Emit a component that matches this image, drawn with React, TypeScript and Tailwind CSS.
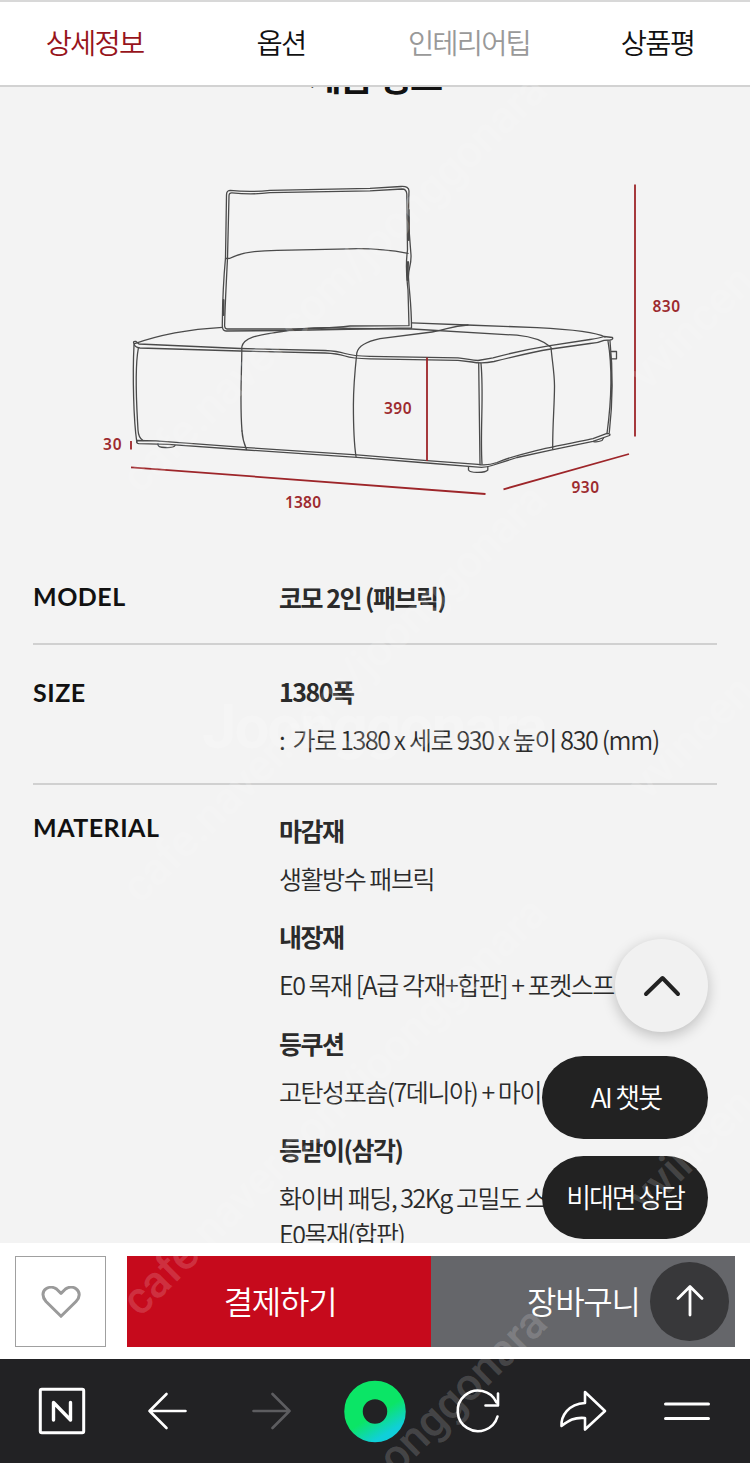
import React from 'react';

interface Tab {
  label: string;
  className: string;
}

interface MaterialItem {
  title: string;
  lines: string[];
}

const TABS: Tab[] = [
  { label: '상세정보', className: 'text-[#97141b]' },
  { label: '옵션', className: 'text-[#111111]' },
  { label: '인테리어팁', className: 'text-[#999999]' },
  { label: '상품평', className: 'text-[#111111]' },
];

const MATERIALS: MaterialItem[] = [
  { title: '마감재', lines: ['생활방수 패브릭'] },
  { title: '내장재', lines: ['E0 목재 [A급 각재+합판] + 포켓스프'] },
  { title: '등쿠션', lines: ['고탄성포솜(7데니아) + 마이'] },
  { title: '등받이(삼각)', lines: ['화이버 패딩, 32Kg 고밀도 스', 'E0목재(합판)'] },
];

/**
 * Sticky tab bar at the top of the product page
 */
function TabBar() {
  return (
    <nav className="relative z-10 grid h-[87px] shrink-0 grid-cols-[189px_184px_192px_185px] border-t-2 border-b-2 border-t-[#d8d8d8] border-b-[#d2d2d2] bg-white">
      {TABS.map((tab) => (
        <button
          key={tab.label}
          className={`flex items-center justify-center pb-0.5 text-[28.5px] leading-none font-[350] tracking-[-1.8px] ${tab.className}`}
        >
          {tab.label}
        </button>
      ))}
    </nav>
  );
}

/**
 * Line drawing of the sofa with its dimensions in mm
 */
function SofaDrawing() {
  return (
    <svg className="block h-[360px] w-[600px] shrink-0" viewBox="95 170 600 360">
      <g fill="none" stroke="#4a4a4a" strokeWidth="1.3" strokeLinecap="round" strokeLinejoin="round">
        {/* Backrest */}
        <path d="M225.5 258 L226.5 195 Q226.5 190.5 230 190.3 Q250 192.5 270 190.3 L370 188.3 L401 186.5 Q409 186 409 191 C408 215 409 235 411 255 C411.5 266 408 268 408.5 278 C409.5 295 411.5 305 411.5 328 L285 330.5 L226 331 Q222.5 331 222.3 326 C222.5 305 222.5 290 225.5 258" />
        <path d="M227.5 258 L229 196 Q229 192.5 232 192.8 Q252 195 270 192.6 L370 190.8 L402 189 Q406.5 189 406.8 194 L407.5 250 C405 268 407 280 408 290 L409 325.7 L350 326 C325 329 310 329 285 329 L227 329 Q225 329 224.6 326 C225 305 226 290 227.5 258" />
        <path d="M225.5 258.5 L230 258.3 C240 253 255 250.5 277 250.3 L350 248.8 C375 248 390 250 408 253.3" />
        <path d="M408.8 210 V240 M408 262 L407.5 280 M223.5 300 V315" strokeWidth="2" />
        {/* Seat top */}
        <path d="M134 343.8 C150 338 175 330 222.5 327.3" />
        <path d="M411.7 322.9 L467 325 L537 327.6 C565 329 595 331.5 605 337" />
        <path d="M134 343.5 Q132.5 341 136 341.5 L139 344 L240 348.5 L325 350.5 Q337 351 345 353.5 Q353 356 370 356.3 L458 357.8 Q470 359.5 478 360.5 L493 357.8 C515 352 535 348 550 345.6 L590 339.5 Q600 338 604 336.5 L612.5 337.5 Q613.5 339.5 610 340 L604 340.3 Q598 343 590 343.5 L551 349 C530 352.5 510 357.5 494 361.5 Q482 364 472 362 L458 360.4 L370 358.8 Q352 358.5 345 356 Q337 353.5 325 353 L240 351 L140 348 Q134 347 134 343.5" />
        <path d="M242 431 C239.5 400 242 370 241.8 347 C244 335.5 265 334.5 282 331.5 C300 328 325 327 350 328.5" />
        <path d="M468 325 C450 326 447 330 432 332 L380 338.7 Q359 343 356.8 353 C355 370 353.4 385 353.4 405 C353.4 430 353.5 440 356 456.5" />
        <path d="M350 328.5 L412 329 L517 335.2 C535 337 545 342 551 347.3 C552 360 554.5 373 554.5 386 C554.5 405 552.5 425 552.7 449" />
        <path d="M242 431 Q242.5 440 246.5 449.5" />
        {/* Sides */}
        <path d="M134 345 C132.5 375 133.5 420 136.8 442 M138.3 348.5 C134 372 137 410 138 430 Q138.5 438 143 440.5" />
        <path d="M478.7 363.5 L480 464.5 M481 363.5 C484 395 480 430 482 464" />
        <path d="M608 341 C612 365 611.5 400 607 433.5 M610 341 C612.5 365 613 400 609.3 432.5" />
        <path d="M611.5 351.5 H616.5 V358.8 H611.5" />
        {/* Bottom edge */}
        <path d="M137 440.5 L156 440.8 L247 447.6 L357 454.8 L427 460.7 L478 464.3 Q487 466 497 462.5 C520 453 550 447.5 593 438.7 L607 433.3 Q611 433.5 609.5 435.5 L593 441.3 L552 449.8 L517 457.5 L492 465.5 Q485 468.2 475 466.8 L427 463 L357 457.3 L247 450 L168 444.3 L139 443.7 Q136 443.5 137 440.5" />
        <path d="M158 444 Q157.5 447.5 165 447.5 Q174 448 175 445.5 M468.5 467 V470 Q470 472.5 478 472.3 Q486 472.3 487.8 470 V467 M593.5 441.5 Q597 442.5 602 440.5 L603.5 438" />
      </g>
      <g fill="none" stroke="#9d2529" strokeWidth="1.8">
        <path d="M635 184.5 V436.5 M427 357.5 V461 M131 441 V449.5 M131 467.3 L485.5 494 M503.5 489.3 L629 454" />
      </g>
      <g fill="#9d2b2f" fontFamily="'Noto Sans', sans-serif" fontSize="15.5" fontWeight="600">
        <text x="652.5" y="312" textLength="27.5">830</text>
        <text x="384" y="414" textLength="27.5">390</text>
        <text x="103" y="449.5" textLength="18.5">30</text>
        <text x="285" y="508" textLength="36">1380</text>
        <text x="571.5" y="493.3" textLength="27.5">930</text>
      </g>
    </svg>
  );
}

interface SpecRowProps {
  label: string;
  className: string;
  children: React.ReactNode;
}

function SpecRow({ label, className, children }: SpecRowProps) {
  return (
    <div className={`mx-[33px] flex shrink-0 ${className}`}>
      <dt className="w-[246px] shrink-0 font-[Lato,sans-serif] text-[25px] leading-9 font-bold tracking-[0.5px] text-[#111111]">
        {label}
      </dt>
      <dd className="min-w-0 whitespace-nowrap text-[#2b2b2b]">{children}</dd>
    </div>
  );
}

function Specs() {
  return (
    <dl className="flex flex-col">
      <SpecRow label="MODEL" className="h-[67px] border-b-2 border-[#d0d0d0]">
        <p className="pt-px text-[25px] leading-9 font-bold tracking-[-1.5px]">코모 2인 (패브릭)</p>
      </SpecRow>
      <SpecRow label="SIZE" className="h-[140px] border-b-2 border-[#d0d0d0] pt-[29px]">
        <p className="-mt-px text-[25px] leading-9 font-bold tracking-[-1.5px]">1380폭</p>
        <p className="mt-3 text-[25px] leading-9 font-[350] tracking-[-1.35px]">
          :<span className="pl-1"> 가로 1380 x 세로 930 x 높이 830 (mm)</span>
        </p>
      </SpecRow>
      <SpecRow label="MATERIAL" className="pt-[24px]">
        <div className="flex flex-col gap-[21.8px] pt-[3px]">
          {MATERIALS.map((item) => (
            <div key={item.title}>
              <p className="text-[25px] leading-9 font-bold tracking-[-1.5px]">{item.title}</p>
              <div className="mt-3">
                {item.lines.map((line) => (
                  <p key={line} className="text-[25px] leading-[36.5px] font-[350] tracking-[-1.45px]">
                    {line}
                  </p>
                ))}
              </div>
            </div>
          ))}
        </div>
      </SpecRow>
    </dl>
  );
}

/**
 * Buttons that float above the product details
 */
function FloatingActions() {
  return (
    <div className="absolute right-[42px] bottom-1 z-10 flex flex-col items-end">
      <button className="mb-6 flex h-[93px] w-[93px] items-center justify-center rounded-full bg-[#f1f1f1] shadow-[0_4px_14px_rgba(0,0,0,0.22)]">
        <svg className="h-6 w-10" viewBox="0 0 40 24" fill="none" stroke="#222222" strokeWidth="4" strokeLinecap="round" strokeLinejoin="round">
          <path d="M4 20 L20.5 4 L36 20" />
        </svg>
      </button>
      <button className="mb-[17px] flex h-[83px] w-[166px] items-center justify-center rounded-full bg-[#222222] pb-px pl-0.5 text-[27px] font-[350] tracking-[-1.8px] text-white">
        AI 챗봇
      </button>
      <button className="flex h-[83px] w-[166px] items-center justify-center rounded-full bg-[#222222] pb-px text-[27px] font-[350] tracking-[-2.1px] text-white">
        비대면 상담
      </button>
    </div>
  );
}

function PurchaseBar() {
  return (
    <div className="flex h-[116px] shrink-0 bg-white px-[15px] pt-[13px]">
      <button className="flex h-[91px] w-[91px] items-center justify-center border border-[#a0a0a0]">
        <svg className="h-8 w-10" viewBox="0 0 40 32" fill="none" stroke="#9a9a9a" strokeWidth="3" strokeLinejoin="round">
          <path d="M20 30.3 L5 15.5 C0.5 10.5 1.5 5 5 2.7 C8.5 0.7 13 1 15.5 3 L20 7.3 L24.5 3 C27.5 0.7 32 0.7 35 2.7 C39.5 6 39 11.5 35 15.5 Z" />
        </svg>
      </button>
      <button className="ml-[21px] h-[91px] w-[304px] bg-[#c60a1c] pb-1 pl-0.5 text-[32px] font-[350] tracking-[-1.3px] text-white">
        결제하기
      </button>
      <div className="flex h-[91px] flex-1 items-center bg-[#65666a]">
        <button className="w-[219px] pb-1 pl-[96px] text-left text-[32px] leading-none font-[350] tracking-[-1.3px] whitespace-nowrap text-white">
          장바구니
        </button>
        <button className="-mt-px flex h-[79px] w-[79px] items-center justify-center rounded-full bg-[#38383a]">
          <svg className="h-8 w-7" viewBox="0 0 28 32" fill="none" stroke="#ffffff" strokeWidth="2.8" strokeLinecap="round" strokeLinejoin="round">
            <path d="M14 30 V2 M2 13.5 L14 1.5 L26 13.5" />
          </svg>
        </button>
      </div>
    </div>
  );
}

/**
 * Browser toolbar
 */
function BrowserToolbar() {
  return (
    <div className="h-[104px] shrink-0 bg-[#222224]">
      <svg className="block h-[104px] w-[750px]" viewBox="0 1359 750 104" fill="none" stroke="#ffffff" strokeWidth="2.6" strokeLinecap="round" strokeLinejoin="round">
        <defs>
          <linearGradient id="ring" x1="0.2" y1="0" x2="0.8" y2="1">
            <stop offset="0.55" stopColor="#0be566" />
            <stop offset="1" stopColor="#10cfd9" />
          </linearGradient>
        </defs>
        <rect x="40.3" y="1389.3" width="43.4" height="43.4" rx="1.5" strokeWidth="3" />
        <path d="M53.5 1420 V1402.5 L70.5 1420 V1402.5" strokeWidth="3.4" />
        <path d="M185.5 1411 H149.5 M166.5 1394 L149.5 1411 L166.5 1428" />
        <path d="M253.5 1411 H289.5 M272.5 1394 L289.5 1411 L272.5 1428" stroke="#5d5d60" />
        <circle cx="375" cy="1411.5" r="21.5" stroke="url(#ring)" strokeWidth="18.5" />
        <path d="M497.5 1416.5 A20.3 20.3 0 1 1 496.5 1402.5 M498 1393.5 V1405.5 H485.5" />
        <path d="M585 1392 L605 1411 L585 1429.5 V1418 C574 1417 569 1420.5 561.5 1426 C561 1416 568 1404 585 1403 Z" />
        <path d="M665.5 1404 H708.5 M665.5 1418.5 H708.5" strokeWidth="3" />
      </svg>
    </div>
  );
}

/**
 * Translucent site and user marks laid over the whole page
 */
function Watermark() {
  return (
    <svg className="pointer-events-none absolute inset-0 z-20 h-[1463px] w-[750px]" viewBox="0 0 750 1463" fill="#ffffff" fillOpacity="0.17" fontFamily="Roboto, sans-serif" fontWeight="500">
      {[495, 905, 1318, 1728].map((y) => (
        <g key={y} fontSize="45">
          <text transform={`translate(140 ${y}) rotate(-44.5)`} textLength="574">
            cafe.naver.com/joonggonara
          </text>
          <text transform={`translate(647 ${y - 103}) rotate(-44.5)`}>vvincen</text>
        </g>
      ))}
      <text x="202" y="748" fontSize="62" fontWeight="700" textLength="346">
        Joonggonara
      </text>
    </svg>
  );
}

export default function App() {
  return (
    <div className="relative flex h-[1463px] w-[750px] flex-col overflow-hidden bg-[#f3f3f3] font-['Noto_Sans_CJK_KR',sans-serif]">
      <TabBar />
      <main className="relative flex h-[1156px] shrink-0 flex-col overflow-hidden">
        <h2 className="-mt-8 h-[115px] shrink-0 text-center text-[36px] leading-[40px] font-bold tracking-[-1.5px] text-[#111111]">
          제품 정보
        </h2>
        <div className="ml-[95px] h-[408px] shrink-0">
          <SofaDrawing />
        </div>
        <Specs />
        <FloatingActions />
      </main>
      <PurchaseBar />
      <BrowserToolbar />
      <Watermark />
    </div>
  );
}
